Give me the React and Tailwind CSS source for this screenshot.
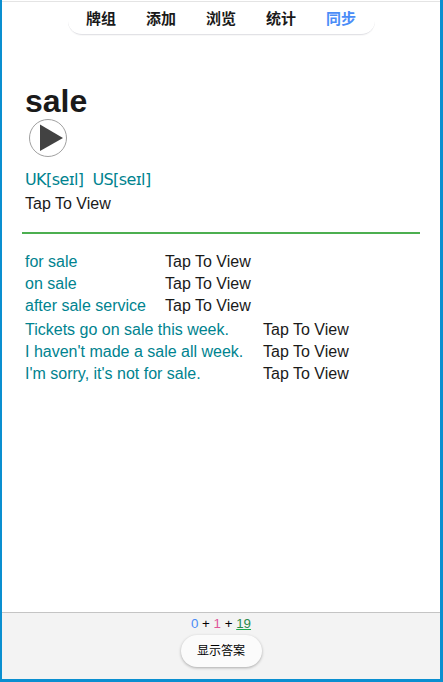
const navItems = ["牌组", "添加", "浏览", "统计", "同步"];

const collocations = ["for sale", "on sale", "after sale service"];
const sentences = [
  "Tickets go on sale this week.",
  "I haven't made a sale all week.",
  "I'm sorry, it's not for sale.",
];

const App = () => {
  return (
    <div className="h-[682px] flex flex-col border-l-2 border-r-[3px] border-b-[3px] border-[#0a8fd0] bg-white text-[#1a1a1a] font-['Liberation_Sans','Noto_Sans_CJK_SC',sans-serif]">
      <div className="flex-1 min-h-0 pt-px">
        <div className="border-t border-[#e4e4e4]">
          {/* Nav */}
          <div className="mx-auto w-[307px] h-[33px] flex justify-center items-start pt-[7px] rounded-b-[14px] border-b border-[#e2e2e6] shadow-[0_1px_1px_rgba(0,0,0,0.03)]">
            {navItems.map((item) => (
              <span
                key={item}
                className={`w-[60px] text-center text-[15px] leading-[20px] font-bold ${
                  item === "同步" ? "text-[#4a8cf7]" : "text-[#1a1a1a]"
                }`}
              >
                {item}
              </span>
            ))}
          </div>

          {/* Word */}
          <div className="pl-[23px] pt-[48px]">
            <h1 className="text-[32px] leading-[37px] font-bold">sale</h1>
            <svg width="40" height="40" viewBox="0 0 40 40" className="ml-[3px] mt-[-2px]">
              <circle cx="20" cy="20" r="18.5" fill="#fff" stroke="#a0a0a0" strokeWidth="1" />
              <path d="M12 6.5 L35 20 L12 33 Z" fill="#424242" />
            </svg>
            <div className="mt-[12px] text-[16px] leading-[20px] text-[#00838f] font-['DejaVu_Sans',sans-serif] tracking-[-0.6px]">
              UK[seɪl]&nbsp; US[seɪl]
            </div>
            <div className="mt-[3px] text-[16px] leading-[22px]">Tap To View</div>
          </div>

          <hr className="mt-[17px] ml-[20px] mr-[20px] border-t-2 border-[#4caf50]" />

          {/* Collocations */}
          <div className="mt-[17px] pl-[23px] text-[16px] leading-[22px]">
            {collocations.map((c) => (
              <div key={c} className="flex">
                <span className="w-[140px] text-[#00838f]">{c}</span>
                <span>Tap To View</span>
              </div>
            ))}
          </div>

          {/* Sentences */}
          <div className="mt-[2px] pl-[23px] text-[16px] leading-[22px]">
            {sentences.map((s) => (
              <div key={s} className="flex">
                <span className="w-[238px] text-[#00838f]">{s}</span>
                <span>Tap To View</span>
              </div>
            ))}
          </div>
        </div>
      </div>

      {/* Bottom bar */}
      <div className="h-[67px] bg-[#f3f3f3] border-t border-[#c4c4c4] flex flex-col items-center">
        <div className="mt-[3px] text-[13.33px] leading-[16px] text-black">
          <span className="text-[#4a8cf7]">0</span> + <span className="text-[#e0559a]">1</span> +{" "}
          <span className="text-[#2a8a4a] underline decoration-[#1aa84a]">19</span>
        </div>
        <button className="mt-[3px] w-[81px] h-[32px] rounded-[16px] bg-[#fbfbfb] text-[12px] text-black shadow-[0_1px_3px_rgba(0,0,0,0.3)]">
          显示答案
        </button>
      </div>
    </div>
  );
};

export default App;
